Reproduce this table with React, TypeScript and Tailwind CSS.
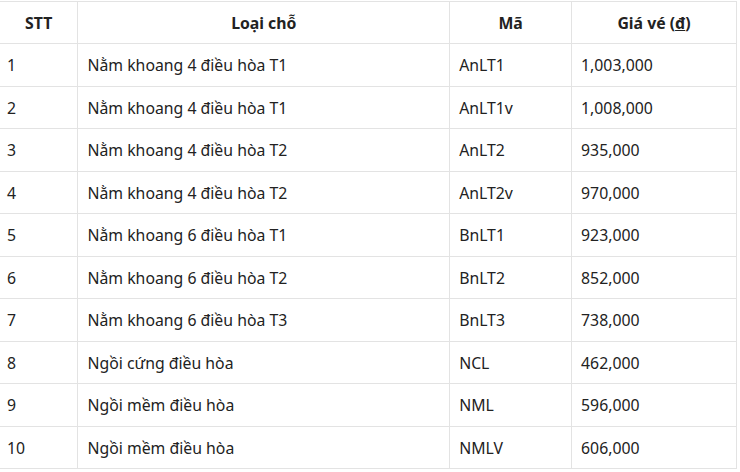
const rows = [
  ["1", "Nằm khoang 4 điều hòa T1", "AnLT1", "1,003,000"],
  ["2", "Nằm khoang 4 điều hòa T1", "AnLT1v", "1,008,000"],
  ["3", "Nằm khoang 4 điều hòa T2", "AnLT2", "935,000"],
  ["4", "Nằm khoang 4 điều hòa T2", "AnLT2v", "970,000"],
  ["5", "Nằm khoang 6 điều hòa T1", "BnLT1", "923,000"],
  ["6", "Nằm khoang 6 điều hòa T2", "BnLT2", "852,000"],
  ["7", "Nằm khoang 6 điều hòa T3", "BnLT3", "738,000"],
  ["8", "Ngồi cứng điều hòa", "NCL", "462,000"],
  ["9", "Ngồi mềm điều hòa", "NML", "596,000"],
  ["10", "Ngồi mềm điều hòa", "NMLV", "606,000"],
];

export default function App() {
  return (
    <div className="w-[740px] h-[472px] bg-white pt-px" style={{ fontFamily: '"Noto Sans", "Open Sans", sans-serif' }}>
      <table className="w-[737px] border-collapse text-[15.8px] text-[#222]">
        <colgroup>
          <col className="w-[78px]" />
          <col className="w-[372px]" />
          <col className="w-[122px]" />
          <col className="w-[165px]" />
        </colgroup>
        <thead>
          <tr className="h-[42px]">
            <th className="border border-[#e3e3e3] border-l-0 pt-[3px] font-bold text-center">STT</th>
            <th className="border border-[#e3e3e3] pt-[3px] font-bold text-center">Loại chỗ</th>
            <th className="border border-[#e3e3e3] pt-[3px] font-bold text-center">Mã</th>
            <th className="border border-[#e3e3e3] pt-[3px] font-bold text-center">
              Giá vé (<span className="underline">đ</span>)
            </th>
          </tr>
        </thead>
        <tbody>
          {rows.map((r) => (
            <tr key={r[0]} className="h-[42.5px]">
              <td className="border border-[#e3e3e3] border-l-0 pl-[7px] pt-[3px]">{r[0]}</td>
              <td className="border border-[#e3e3e3] pl-[9px] pt-[3px]">{r[1]}</td>
              <td className="border border-[#e3e3e3] pl-[9px] pt-[3px]">{r[2]}</td>
              <td className="border border-[#e3e3e3] pl-[9px] pt-[3px]">{r[3]}</td>
            </tr>
          ))}
        </tbody>
      </table>
    </div>
  );
}
